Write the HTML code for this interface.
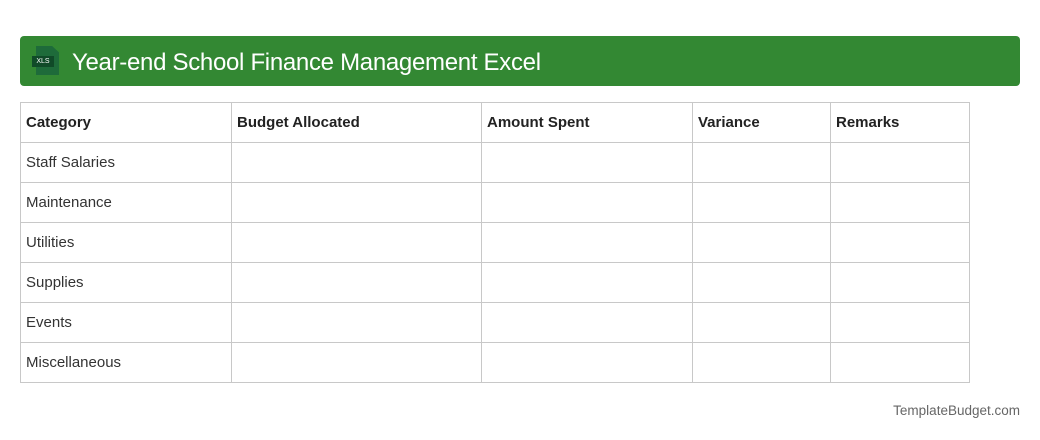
<!DOCTYPE html>
<html><head><meta charset="utf-8"><style>
body{margin:0;width:1040px;height:440px;background:#fff;font-family:"Liberation Sans",Arial,sans-serif;position:relative;overflow:hidden}
.hdr{position:absolute;left:20px;top:36px;width:1000px;height:50px;background:#338833;border-radius:4px}
.hdr .t{position:absolute;left:52px;top:13px;font-size:24px;color:#fff;letter-spacing:-0.3px}
.ic{position:absolute;left:16px;top:10px;width:23px;height:29px;background:#1e6b3a;clip-path:polygon(0 0,70% 0,100% 22%,100% 100%,0 100%)}
.ic2{position:absolute;left:12px;top:20px;width:22px;height:11px;background:#104a28;color:#fff;font-size:7px;line-height:11px;text-align:center}
table{position:absolute;left:20px;top:102px;border-collapse:collapse;width:950px}
td,th{border:1px solid #c8c8c8;height:39px;padding:0 5px;font-size:15px;color:#333;text-align:left}
th{font-weight:bold;color:#222}
.f{position:absolute;right:20px;top:403px;font-size:13.5px;color:#666}
</style></head><body>
<div class="hdr"><div class="ic"></div><div class="ic2">XLS</div><div class="t">Year-end School Finance Management Excel</div></div>
<table>
<tr><th style="width:200px">Category</th><th style="width:239px">Budget Allocated</th><th style="width:200px">Amount Spent</th><th style="width:127px">Variance</th><th>Remarks</th></tr>
<tr><td>Staff Salaries</td><td></td><td></td><td></td><td></td></tr>
<tr><td>Maintenance</td><td></td><td></td><td></td><td></td></tr>
<tr><td>Utilities</td><td></td><td></td><td></td><td></td></tr>
<tr><td>Supplies</td><td></td><td></td><td></td><td></td></tr>
<tr><td>Events</td><td></td><td></td><td></td><td></td></tr>
<tr><td>Miscellaneous</td><td></td><td></td><td></td><td></td></tr>
</table>
<div class="f">TemplateBudget.com</div>
</body></html>
